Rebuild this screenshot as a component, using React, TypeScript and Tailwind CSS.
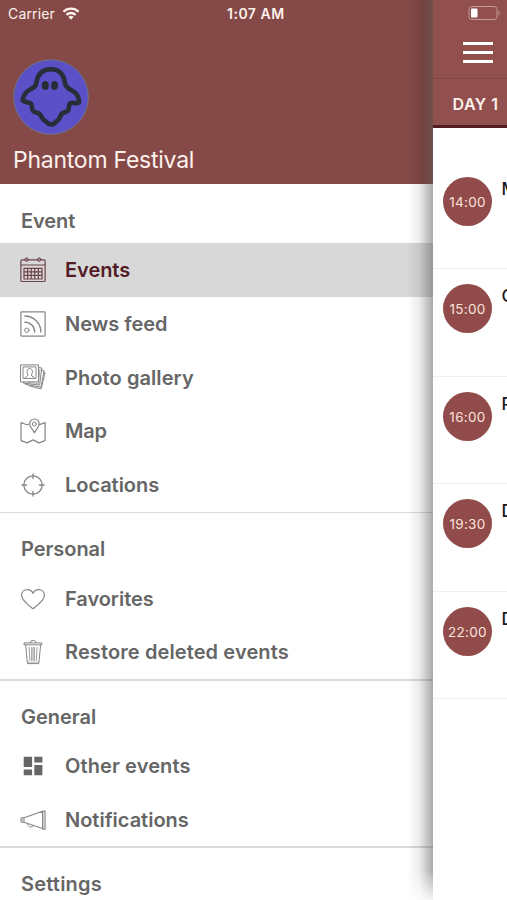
import type { ReactNode } from "react";

type Item = { label: string; icon: ReactNode; active?: boolean; track: string };
type Section = { title: string; items: Item[]; track: string };

function Icon({ children }: { children: ReactNode }) {
  return (
    <svg
      width="26"
      height="26"
      viewBox="0 0 26 26"
      fill="none"
      stroke="currentColor"
      strokeWidth="1"
      strokeLinejoin="round"
      strokeLinecap="round"
      className="shrink-0"
    >
      {children}
    </svg>
  );
}

const calendar = (
  <Icon>
    <g opacity="0.8">
      <path d="M4.900 2.900H1.900a1 1 0 0 0-1 1v19.600a1 1 0 0 0 1 1h22.200a1 1 0 0 0 1-1V3.900a1 1 0 0 0-1-1h-3.200M8.300 2.900h9.200" strokeWidth="1.2" />
      <path d="M1 8h24" />
      <circle cx="6.6" cy="2.6" r="1.7" fill="currentColor" fillOpacity="0.5" />
      <circle cx="19.2" cy="2.6" r="1.7" fill="currentColor" fillOpacity="0.5" />
      <path d="M4 11.300h18v10.700h-18zM4 14.900h18M4 18.400h18M7.6 11.300v10.700M11.2 11.300v10.700M14.8 11.300v10.700M18.4 11.300v10.700" strokeWidth="1.2" />
    </g>
  </Icon>
);

const feed = (
  <Icon>
    <g opacity="0.8">
      <rect x="0.9" y="0.9" width="24.2" height="24.2" rx="0.8" strokeWidth="1.2" />
      <circle cx="6.8" cy="19.2" r="2.2" />
      <path d="M4.8 5c8.8 0 16.1 7.300 16.1 16.1M4.8 11.2c5.600 0 9.900 4.300 9.900 9.900" strokeWidth="1.3" />
    </g>
  </Icon>
);

const gallery = (
  <Icon>
    <g opacity="0.8">
      <path d="M0.900 0.900h17.600v17h-17.600z" />
      <path d="M3.400 2.900h12.600v11.500h-12.600z" />
      <path d="M4.800 14.300c0-1.700 3.200-1.500 3.200-3.400-1.500-2.200-1.500-6.300 1.700-6.300s3.200 4.100 1.700 6.300c0 1.900 3.200 1.700 3.200 3.400" />
      <path d="M18.600 3.600l3.200.4-2.200 17.100-16.200-2 .1-1.100M21.600 6.200l2.500.7-3.200 16.300-15.700-3 .1-.7M23.800 8.300l1.200.4-3.800 16.200-12.600-3.200" />
      <path d="M19.900 5.500l-1.600 14-10.600-1.200" strokeWidth="0.7" />
    </g>
  </Icon>
);

const map = (
  <Icon>
    <g opacity="0.8">
      <path d="M8.600 6.200L7 6.700 1 4.600v18l6.200 2.300 5.900-3 5.900 3 6.100-2.300v-18l-5.600 2" strokeWidth="1.2" />
      <path d="M14.400 14.800c-1.600-3.800-4.800-5.700-4.800-9a4.800 4.800 0 0 1 9.600 0c0 3.300-3.200 5.200-4.800 9z" strokeWidth="1.2" />
      <circle cx="14.400" cy="6" r="2" />
    </g>
  </Icon>
);

const target = (
  <Icon>
    <g opacity="0.8">
      <circle cx="13" cy="13" r="9.200" strokeWidth="1.2" />
      <path d="M13 1.900v4.600M13 19.500v4.600M1.900 13h4.600M19.500 13h4.600" strokeWidth="1.300" />
    </g>
  </Icon>
);

const heart = (
  <Icon>
    <path
      d="M13 22.700C8.800 19.400 1.600 14.700 1.600 9.200c0-3.400 2.600-5.600 5.700-5.600 2.600 0 4.700 1.400 5.700 3.700 1-2.300 3.100-3.700 5.700-3.700 3.100 0 5.700 2.200 5.700 5.600 0 5.500-7.200 10.200-11.400 13.500z"
      strokeWidth="1.2"
      opacity="0.8"
    />
  </Icon>
);

const trash = (
  <Icon>
    <g opacity="0.8">
      <path d="M4.400 3.900h17.400v1.900H4.400zM10.100 3.700c0-3.300 6-3.300 6 0M5.600 6l1.900 18.600h11.300L20.600 6" />
      <path d="M9.200 8.500l.7 13M17 8.500l-.7 13M11.700 8.500v13M14.400 8.500v13M13.050 8.500v13" strokeWidth="0.800" />
      <path d="M7.600 23.200h11" strokeWidth="0.600" />
    </g>
  </Icon>
);

const dashboard = (
  <Icon>
    <path
      d="M3.700 3.800h8.400v10.300H3.700zM14.300 3.800h8.100v5.800h-8.100zM3.700 16.400h8.400v5.800H3.700zM14.300 11.900h8.100v10.300h-8.100z"
      fill="currentColor"
      stroke="none"
    />
  </Icon>
);

const horn = (
  <Icon>
    <g opacity="0.8">
      <path d="M4 10.800L22.600 4.300v17.300L4 15.300zM22.600 4.300V4h2.500v18.200h-2.500v-.6M4 10.800H1.600c-1 0-1 4.500 0 4.500H4" strokeWidth="1.1" />
      <path d="M7.500 16.800c0 3.800 5.600 4.300 6 1.900" />
      <path d="M23.900 4.200v17.800M2.600 11v4" strokeWidth="0.500" />
    </g>
  </Icon>
);

const sections: Section[] = [
  {
    title: "Event",
    track: "tracking-[-0.1px]",
    items: [
      { label: "Events", icon: calendar, active: true, track: "tracking-[-0.05px]" },
      { label: "News feed", icon: feed, track: "tracking-[-0.05px]" },
      { label: "Photo gallery", icon: gallery, track: "tracking-[0.08px]" },
      { label: "Map", icon: map, track: "tracking-[-0.2px]" },
      { label: "Locations", icon: target, track: "tracking-[-0.05px]" },
    ],
  },
  {
    title: "Personal",
    track: "tracking-[-0.05px]",
    items: [
      { label: "Favorites", icon: heart, track: "tracking-[-0.05px]" },
      { label: "Restore deleted events", icon: trash, track: "tracking-[0.11px]" },
    ],
  },
  {
    title: "General",
    track: "tracking-[0px]",
    items: [
      { label: "Other events", icon: dashboard, track: "tracking-[0.1px]" },
      { label: "Notifications", icon: horn, track: "tracking-[0px]" },
    ],
  },
  { title: "Settings", track: "tracking-[0.2px]", items: [] },
];

const schedule = [
  { time: "14:00", name: "M" },
  { time: "15:00", name: "C" },
  { time: "16:00", name: "P" },
  { time: "19:30", name: "D" },
  { time: "22:00", name: "D" },
];

function Ghost() {
  return (
    <svg width="76" height="76" viewBox="0 0 76 76" fill="none" className="block">
      <circle cx="38" cy="38" r="37.300" fill="#5b50c8" stroke="#6e7585" strokeWidth="1" />
      <path
        d="M38 10.200C28 10.200 24.500 17 23.500 23c-.8 4.500-2.500 5.500-5.500 7-5 2.300-7.800 6-8.300 11.500 2.500 1.700 5.500 1.500 8 2.800 1.800 1.500.5 5 2.300 7.500 1.500 2 4.500 1.200 6.500 3 2 2 2 4.500 4.500 6.200 2.500 1.500 3.500 4.500 7.200 4.500s4.700-3 7-4.700c2.300-1.800 2-4.500 3.800-6.300 1.800-1.700 4.500-1 6-3 1.700-2.300.2-5.200 2-7 2.500-2 6.500 1 9-1 .2-6-3-10-7.500-12.200-3-1.500-5.500-2.500-6.500-7C51 17 48 10.200 38 10.200z"
        stroke="#282d38"
        strokeWidth="4.600"
        strokeLinejoin="round"
      />
      <ellipse cx="32.300" cy="26.500" rx="3.500" ry="4.500" fill="#282d38" />
      <ellipse cx="41.500" cy="26.500" rx="3.500" ry="4.500" fill="#282d38" />
    </svg>
  );
}

function Drawer() {
  return (
    <aside className="relative flex h-[900px] w-[433px] shrink-0 flex-col overflow-hidden bg-white">
      <header className="h-[184px] shrink-0 bg-[#854a48] text-[#fdf1ec]">
        <div className="flex h-7 items-center pl-2 text-[14px] leading-7">
          <span className="w-[48px] tracking-[0.15px]">Carrier</span>
          <svg width="18" height="14" viewBox="0 0 18 14" fill="none" stroke="#fdf1ec" strokeWidth="2.300" className="ml-[6px] shrink-0">
            <path d="M1.400 4.800a10.800 10.800 0 0 1 15.200 0M4.400 7.900a6.500 6.500 0 0 1 9.200 0" />
            <path d="M9 12.700l-2.600-2.700a3.700 3.700 0 0 1 5.200 0z" fill="#fdf1ec" stroke="none" />
          </svg>
          <span className="ml-[147px] whitespace-nowrap font-semibold tracking-[0.5px]">1:07 AM</span>
        </div>
        <div className="mt-[31px] pl-[13px]">
          <Ghost />
        </div>
        <h1 className="mt-[10px] pl-[13px] text-[23px] leading-[31px] tracking-[-0.250px]">Phantom Festival</h1>
      </header>
      <nav className="text-[20px] font-[560] text-[#666666]">
        {sections.map((s, i) => (
          <section key={s.title}>
            {i > 0 && <div className="h-[1.500px] bg-[#d9d9d9]" />}
            <h2
              className={
                i > 0
                  ? "h-[58.500px] pl-[21px] pt-[21px] leading-[30px]"
                  : "h-[59.250px] pl-[21px] pt-[22px] leading-[30px]"
              }
            >
              <span className={s.track}>{s.title}</span>
            </h2>
            {s.items.map((it) => (
              <a
                key={it.label}
                className={
                  it.active
                    ? "flex h-[53.700px] items-center bg-[#d8d8d8] pl-[20px] text-[#521c27]"
                    : "flex h-[53.700px] items-center pl-[20px]"
                }
              >
                {it.icon}
                <span className={`ml-[19px] whitespace-nowrap pt-[0.500px] ${it.track}`}>{it.label}</span>
              </a>
            ))}
          </section>
        ))}
      </nav>
      <div className="absolute inset-y-0 right-0 w-[26px] bg-linear-to-r from-transparent via-black/8 to-[#555555]/50 mask-b-from-[870px] mask-b-to-[905px]" />
    </aside>
  );
}

function Schedule() {
  return (
    <main className="flex h-[900px] w-[160px] shrink-0 flex-col bg-white">
      <div className="flex h-[79px] flex-col border-b border-[#844544] bg-[#914f4e]">
        <div className="flex h-[26px] items-center pl-[35px]">
          <svg width="32" height="16" viewBox="0 0 32 16" fill="none">
            <rect x="1" y="1.500" width="28" height="13" rx="3" stroke="#c39b99" />
            <rect x="3" y="3.500" width="6.500" height="9" rx="1" fill="#fff" />
            <path d="M30.500 5.500c1.500.5 1.500 4.500 0 5z" fill="#c39b99" />
          </svg>
        </div>
        <div className="ml-[30px] mt-[16px] flex w-[30px] flex-col gap-[6px] self-start">
          <i className="h-[3px] bg-white" />
          <i className="h-[3px] bg-white" />
          <i className="h-[3px] bg-white" />
        </div>
      </div>
      <div className="h-[49px] border-b-[3px] border-[#521d20] bg-[#914f4e] pl-[19.500px] text-[16px] font-semibold leading-[50px] tracking-[0.500px] text-[#fdf1ec]">
        DAY 1
      </div>
      <ul className="pt-[33.500px]">
        {schedule.map((e) => (
          <li key={e.time} className="flex h-[107.500px] border-b border-[#efefef] pl-[10px] pt-[15.200px]">
            <div className="flex size-[49px] items-center justify-center rounded-full bg-[#914b4b] pt-[1px] text-[13.500px] tracking-[0.300px] text-[#fbe3dc]">
              {e.time}
            </div>
            <span className="ml-[9.500px] text-[17px] font-medium leading-[24px] text-[#1a1a1a]">{e.name}</span>
          </li>
        ))}
      </ul>
    </main>
  );
}

export default function App() {
  return (
    <div className="flex h-[900px] w-[507px] overflow-hidden font-['Inter','Liberation_Sans',sans-serif]">
      <Drawer />
      <Schedule />
    </div>
  );
}
